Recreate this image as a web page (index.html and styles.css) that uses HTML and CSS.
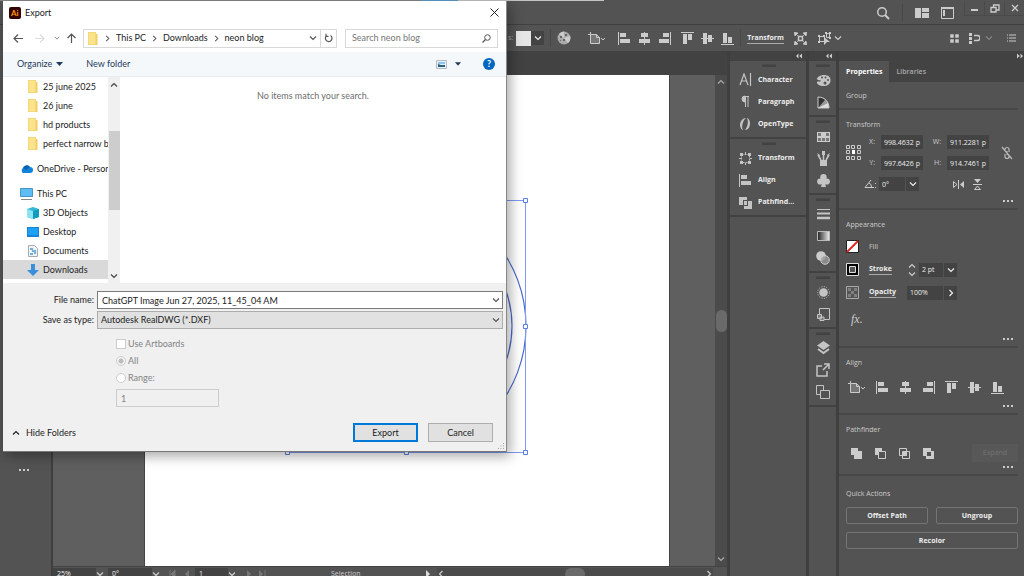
FILE: index.html
```html
<!DOCTYPE html>
<html lang="en">
<head>
    <meta charset="UTF-8">
    <meta name="viewport" content="width=device-width, initial-scale=1.0">
    <title>Export</title>
    <link rel="stylesheet" href="styles.css">
</head>
<body>
    <!-- Shared icons -->
    <svg class="sprite" aria-hidden="true">
        <symbol id="al-left" viewBox="0 0 13 13"><path d="M.5 0v13" stroke="currentColor"/><path d="M2 1h6v4H2zM2 7h10v4H2z" fill="currentColor"/></symbol>
        <symbol id="al-center" viewBox="0 0 13 13"><path d="M6.500 0v13" stroke="currentColor"/><path d="M3 1h7v4H3zM1 7h11v4H1z" fill="currentColor"/></symbol>
        <symbol id="al-right" viewBox="0 0 13 13"><path d="M12.500 0v13" stroke="currentColor"/><path d="M5 1h6v4H5zM1 7h10v4H1z" fill="currentColor"/></symbol>
        <symbol id="al-top" viewBox="0 0 13 13"><path d="M0 .5h13" stroke="currentColor"/><path d="M2 2h4v10H2zM7 2h4v6H7z" fill="currentColor"/></symbol>
        <symbol id="al-middle" viewBox="0 0 13 13"><path d="M0 6.500h13" stroke="currentColor"/><path d="M2 1h4v11H2zM7 3h4v7H7z" fill="currentColor"/></symbol>
        <symbol id="al-bottom" viewBox="0 0 13 13"><path d="M0 12.500h13" stroke="currentColor"/><path d="M2 1h4v10H2zM7 5h4v6H7z" fill="currentColor"/></symbol>
        <symbol id="artboard" viewBox="0 0 18 13"><path d="M2.500 0v2M0 2.500h2" stroke="currentColor"/><path d="M2.500 2.500h6l3 3v6h-9z" fill="#777" stroke="currentColor"/><path d="M8.500 2.500v3h3" fill="none" stroke="currentColor"/><path d="M13 6l2 2 2-2" fill="none" stroke="currentColor"/></symbol>
        <symbol id="down" viewBox="0 0 8 8"><path d="M1 2.500l3 3 3-3" fill="none" stroke="currentColor" stroke-width="1.200"/></symbol>
        <symbol id="up" viewBox="0 0 8 8"><path d="M1 5.500l3-3 3 3" fill="none" stroke="currentColor" stroke-width="1.200"/></symbol>
        <symbol id="right" viewBox="0 0 8 8"><path d="M2.500 1l3 3-3 3" fill="none" stroke="currentColor" stroke-width="1.200"/></symbol>
        <symbol id="left" viewBox="0 0 8 8"><path d="M5.500 1l-3 3 3 3" fill="none" stroke="currentColor" stroke-width="1.200"/></symbol>
        <symbol id="collapse" viewBox="0 0 6 6"><path d="M2.500 .5v5L0 3zM6 .5v5L3.300 3z" fill="currentColor"/></symbol>
        <symbol id="folder" viewBox="0 0 12 13"><path d="M1 0h8v2h1.500v11H1z" fill="#f0ce62"/><path d="M1.500 .5h7v12h-7z" fill="#fbe28c"/></symbol>
        <symbol id="xform" viewBox="0 0 13 13"><path d="M2.500 2.500h8v8h-8z" fill="none" stroke="currentColor" stroke-dasharray="2 1"/><path d="M1 1h3v3H1zM9 1h3v3H9zM1 9h3v3H1zM9 9h3v3H9zM6 0h1v2H6zM6 11h1v2H6zM0 6h2v1H0zM11 6h2v1h-2z" fill="currentColor"/></symbol>
        <symbol id="dots" viewBox="0 0 12 4"><path d="M1 1h2v2H1zM5 1h2v2H5zM9 1h2v2H9z" fill="currentColor"/></symbol>
    </svg>

    <div class="behind"><span class="behind-blue"></span><span class="behind-light"></span></div>

    <!-- Application bars -->
    <header class="titlebar">
        <button class="ib" aria-label="Search"><svg width="14" height="14" viewBox="0 0 14 14"><circle cx="6" cy="6" r="4.300" fill="none" stroke="currentColor" stroke-width="1.500"/><path d="M9 9l4 4" stroke="currentColor" stroke-width="2"/></svg></button>
        <span class="sep"></span>
        <button class="ib" aria-label="Arrange"><svg width="14" height="10" viewBox="0 0 14 10"><path d="M0 0h6v10H0zM7 0h7v4H7zM7 5h7v5H7z" fill="currentColor"/></svg></button>
        <button class="ib" aria-label="Workspace"><svg width="13" height="12" viewBox="0 0 13 12"><path d="M.5 .5h12v11H.5z" fill="none" stroke="currentColor"/><path d="M0 0h13v2H0zM2 3h2v6H2z" fill="currentColor"/></svg></button>
        <div class="wincontrols">
            <button class="ib" aria-label="Minimize"><svg width="9" height="9" viewBox="0 0 9 9"><path d="M1 6h7" stroke="currentColor" stroke-width="2"/></svg></button>
            <button class="ib" aria-label="Restore"><svg width="10" height="9" viewBox="0 0 10 9"><path d="M1 3.500h5V8H1zM3.500 3V1H9v5H6" fill="none" stroke="currentColor" stroke-width="1.300"/></svg></button>
            <button class="ib" aria-label="Close application"><svg width="8" height="8" viewBox="0 0 8 8"><path d="M1 1l6 6M7 1L1 7" stroke="currentColor" stroke-width="1.300"/></svg></button>
        </div>
    </header>

    <div class="controlbar">
        <span class="muted">s:</span>
        <span class="style-swatch"></span>
        <button class="ib field-dark" aria-label="Style"><svg width="8" height="8"><use href="#down"/></svg></button>
        <span class="sep"></span>
        <button class="ib globe" aria-label="Recolor artwork"><svg width="14" height="14" viewBox="0 0 14 14"><circle cx="7" cy="7" r="6.500" fill="#aaa"/><path d="M7 7L2 3A6.500 6.500 0 0 1 7 .5zM7 7l6-2a6.500 6.500 0 0 1-2 7z" fill="#ccc"/><path d="M3 5h2v2H3zM6 8h2v2H6zM3 9h1v1H3zM8 3h2v2H8z" fill="#666"/></svg></button>
        <button class="ib" aria-label="Align to"><svg width="18" height="13"><use href="#artboard"/></svg></button>
        <div class="aligns">
            <button class="ib" aria-label="Align left"><svg width="13" height="13"><use href="#al-left"/></svg></button>
            <button class="ib" aria-label="Align center"><svg width="13" height="13"><use href="#al-center"/></svg></button>
            <button class="ib" aria-label="Align right"><svg width="13" height="13"><use href="#al-right"/></svg></button>
            <button class="ib" aria-label="Align top"><svg width="13" height="13"><use href="#al-top"/></svg></button>
            <button class="ib" aria-label="Align middle"><svg width="13" height="13"><use href="#al-middle"/></svg></button>
            <button class="ib" aria-label="Align bottom"><svg width="13" height="13"><use href="#al-bottom"/></svg></button>
        </div>
        <span class="sep"></span>
        <a class="opt-link" href="#">Transform</a>
        <button class="ib isolate" aria-label="Isolate"><svg width="13" height="13" viewBox="0 0 13 13"><path d="M4.500 4.500h4v4h-4z" fill="none" stroke="currentColor" stroke-width="1.500"/><path d="M0 0l4 1-3 3zM13 0l-4 1 3 3zM0 13l4-1-3-3zM13 13l-4-1 3-3zM1 1l3 3M12 1L9 4M1 12l3-3M12 12L9 9" fill="currentColor" stroke="currentColor" stroke-width=".7"/></svg></button>
        <button class="ib" aria-label="Select similar"><svg width="14" height="13" viewBox="0 0 14 13"><path d="M1.500 4.500h5v5h-5zM8.500 1.500h3v4h-3z" fill="none" stroke="currentColor"/><path d="M0 3h2v2H0zM5 3h2v2H5zM0 9h2v2H0zM7 0h2v2H7zM11 0h2v2h-2zM11 5h2v2h-2zM6 5l6 5H9l-3 3z" fill="currentColor"/></svg></button>
        <button class="ib similar-more" aria-label="More"><svg width="8" height="8"><use href="#down"/></svg></button>
        <div class="controlbar-end">
            <button class="ib" aria-label="Grid"><svg width="9" height="9" viewBox="0 0 9 9"><path d="M0 0h4v4H0zM5 0h4v4H5zM0 5h4v4H0zM5 5h4v4H5z" fill="currentColor" stroke="#535353" stroke-width=".5"/></svg></button>
            <button class="ib" aria-label="Snap"><svg width="11" height="11" viewBox="0 0 11 11"><path d="M0 0h3v3H0zM0 4h3v3H0zM0 8h3v3H0z" fill="currentColor"/><path d="M5 2.500h3.500a2 2 0 0 1 0 5H5" fill="none" stroke="currentColor" stroke-width="1.500"/></svg></button>
            <svg class="faded" width="8" height="8"><use href="#down"/></svg>
            <button class="ib list" aria-label="Menu"><svg width="9" height="8" viewBox="0 0 9 8"><path d="M0 1h1M2 1h7M0 4h1M2 4h7M0 7h1M2 7h7" stroke="currentColor" stroke-width="1.200"/></svg></button>
        </div>
    </div>

    <main class="workspace">
        <aside class="tools"><button class="ib" aria-label="Edit toolbar"><svg width="12" height="4"><use href="#dots"/></svg></button></aside>

        <div class="document">
            <div class="tabstrip"></div>
            <div class="view">
                <div class="pasteboard">
                    <div class="artboard">
                        <svg class="selection" width="246" height="260" viewBox="0 0 246 260" fill="none">
                            <g stroke="#4a69cc" stroke-width="1.200"><ellipse cx="121" cy="129" rx="120" ry="126"/><ellipse cx="121" cy="129" rx="106" ry="106"/></g>
                            <path d="M2.500 3.500h238v252H2.500z" stroke="#7d9bee"/>
                            <g fill="#fff" stroke="#5a7fe8"><path d="M238.500 1.500h4v4h-4zM238.500 127.500h4v4h-4zM238.500 253.500h4v4h-4zM119.500 253.500h4v4h-4zM.5 253.500h4v4h-4z"/></g>
                        </svg>
                    </div>
                </div>
                <div class="vscroll"><svg width="8" height="8"><use href="#up"/></svg><span class="vthumb"></span><svg width="8" height="8"><use href="#down"/></svg></div>
            </div>
            <footer class="statusbar">
                <div class="status-in">
                    <span class="st-field zoom">25%</span><svg class="st-arrow" width="8" height="8"><use href="#down"/></svg>
                    <span class="st-field rot">0°</span><svg class="st-arrow" width="8" height="8"><use href="#down"/></svg>
                    <svg class="st-nav faded" width="22" height="8" viewBox="0 0 22 8"><path d="M1 0v8M6 0v8L2 4z" fill="#aaa" stroke="#aaa"/><path d="M20 0v8l-4-4z" fill="#aaa"/></svg>
                    <span class="st-field page">1</span><svg class="st-arrow" width="8" height="8"><use href="#down"/></svg>
                    <svg class="st-nav faded" width="22" height="8" viewBox="0 0 22 8"><path d="M2 0v8l4-4zM14 0v8l4-4z" fill="#aaa"/><path d="M20 0v8" stroke="#aaa"/></svg>
                    <span class="st-mode">Selection</span>
                    <svg width="6" height="8" viewBox="0 0 6 8"><path d="M1 0v8l4-4z" fill="#ddd"/></svg>
                    <div class="hscroll"><svg width="8" height="8"><use href="#left"/></svg><span class="hthumb"></span><svg width="8" height="8"><use href="#right"/></svg></div>
                </div>
            </footer>
        </div>

        <nav class="dock">
            <div class="dock-head"><svg width="6" height="6"><use href="#collapse"/></svg></div>
            <div class="dock-group">
                <button class="dock-item"><svg width="13" height="14" viewBox="0 0 13 14"><path d="M1 12L5 1l4 11M2.500 8h5M11.500 0v13" fill="none" stroke="currentColor" stroke-width="1.200"/></svg>Character</button>
                <button class="dock-item"><svg width="13" height="14" viewBox="0 0 13 14"><path d="M6 1v6a3 3 0 0 1 0-6z" fill="currentColor" stroke="currentColor"/><path d="M6.500 1v11M9 1v11M6 1.500h4" stroke="currentColor"/></svg>Paragraph</button>
                <button class="dock-item"><svg width="13" height="14" viewBox="0 0 13 14"><path d="M7 1C3 1 1 5 1 8s2 5 3 5c-2-3 0-10 3-12zM6 13c4 0 5-4 5-7S9 1 8 1c2 4 0 10-2 12z" fill="currentColor"/></svg>OpenType</button>
            </div>
            <div class="dock-group">
                <button class="dock-item"><svg width="13" height="13"><use href="#xform"/></svg>Transform</button>
                <button class="dock-item"><svg width="13" height="13"><use href="#al-left"/></svg>Align</button>
                <button class="dock-item"><svg width="13" height="13" viewBox="0 0 13 13"><path d="M0 1h8v3H4v5H0zM5 5h3v4H5zM9 5h4v8H5v-3h4z" fill="currentColor"/></svg>Pathfind...</button>
            </div>
        </nav>

        <nav class="dock icons">
            <div class="dock-head"><svg width="6" height="6"><use href="#collapse"/></svg></div>
            <div class="dock-group">
                <button class="dock-item" aria-label="Color"><svg width="15" height="13" viewBox="0 0 15 13"><path d="M8 1c4 0 7 2 6.500 6S10 12.500 6 12 .5 9 1 8s4 0 4-1-4-.5-4-2 3-4 7-4z" fill="currentColor"/><g fill="#535353"><circle cx="6" cy="3.500" r="1"/><circle cx="9.500" cy="3.500" r="1"/><circle cx="12" cy="6" r="1"/><circle cx="9" cy="9" r="1.500"/></g></svg></button>
                <button class="dock-item" aria-label="Color guide"><svg width="13" height="13" viewBox="0 0 13 13"><path d="M1 1c7 0 11 5 11 11H1z" fill="#999"/><path d="M1 1c3 0 5 1 7 3l-7 8z" fill="#333"/><path d="M1 12L11 7l1 5z" fill="#ddd"/><path d="M1 1c7 0 11 5 11 11H1z" fill="none" stroke="#ccc"/></svg></button>
            </div>
            <div class="dock-group">
                <button class="dock-item" aria-label="Swatches"><svg width="13" height="11" viewBox="0 0 13 11"><path d="M0 1h13v10H0z" fill="#ccc"/><path d="M1 2h3v3H1zM9 2h3v3H9zM1 7h3v3H1zM5 7h3v3H5zM9 7h3v3H9z" fill="#777"/></svg></button>
                <button class="dock-item" aria-label="Brushes"><svg width="13" height="15" viewBox="0 0 13 15"><path d="M3 9h7v6H3z" fill="currentColor"/><path d="M4 9L1 4M6.500 9V2M9 9l3-5" stroke="currentColor" stroke-width="1.500"/><path d="M0 2l3 2-1 2zM5 0h3v4H5zM13 2l-3 2 1 2z" fill="currentColor"/></svg></button>
                <button class="dock-item" aria-label="Symbols"><svg width="13" height="13" viewBox="0 0 13 13"><g fill="currentColor"><circle cx="6.500" cy="3.200" r="3.200"/><circle cx="3.200" cy="7.500" r="3.100"/><circle cx="9.800" cy="7.500" r="3.100"/><path d="M6 6h1l2 7H4z"/></g></svg></button>
            </div>
            <div class="dock-group">
                <button class="dock-item" aria-label="Stroke"><svg width="13" height="12" viewBox="0 0 13 12"><path d="M0 1.500h13" stroke="currentColor"/><path d="M0 5.500h13" stroke="currentColor" stroke-width="2"/><path d="M0 10h13" stroke="currentColor" stroke-width="2.500"/></svg></button>
                <button class="dock-item" aria-label="Gradient"><svg width="13" height="11" viewBox="0 0 13 11"><defs><linearGradient id="gr"><stop stop-color="#222"/><stop offset="1" stop-color="#eee"/></linearGradient></defs><path d="M.5 .5h12v9H.5z" fill="url(#gr)" stroke="#bbb"/></svg></button>
                <button class="dock-item" aria-label="Transparency"><svg width="14" height="14" viewBox="0 0 14 14"><circle cx="5" cy="5" r="4.800" fill="#ccc"/><circle cx="9" cy="9" r="4.300" fill="#999" fill-opacity=".8" stroke="#ccc"/></svg></button>
            </div>
            <div class="dock-group">
                <button class="dock-item" aria-label="Appearance"><svg width="13" height="13" viewBox="0 0 13 13"><circle cx="6.500" cy="6.500" r="4.300" fill="currentColor"/><circle cx="6.500" cy="6.500" r="5.900" fill="none" stroke="currentColor" stroke-dasharray="1 1.500"/></svg></button>
                <button class="dock-item" aria-label="Graphic styles"><svg width="13" height="13" viewBox="0 0 13 13"><path d="M2.500 6V.5h10v11H7" fill="none" stroke="currentColor"/><path d="M.5 6.500h4v4h-4zM3 9h4v3.500H3z" fill="#777" stroke="currentColor"/></svg></button>
            </div>
            <div class="dock-group">
                <button class="dock-item" aria-label="Layers"><svg width="13" height="14" viewBox="0 0 13 14"><path d="M6.500 0L13 4.500 6.500 9 0 4.500z" fill="currentColor"/><path d="M1 8l5.500 4L12 8" fill="none" stroke="currentColor" stroke-width="2"/></svg></button>
                <button class="dock-item" aria-label="Asset export"><svg width="14" height="14" viewBox="0 0 14 14"><path d="M6 3H1v10h10V8" fill="none" stroke="currentColor" stroke-width="1.500"/><path d="M8 1h5v5M13 1L7 7" fill="none" stroke="currentColor" stroke-width="1.500"/></svg></button>
                <button class="dock-item" aria-label="Artboards"><svg width="14" height="14" viewBox="0 0 14 14"><path d="M4 9.500H.5v-9h7V5M4.500 5.500h9v8h-9z" fill="none" stroke="currentColor"/></svg></button>
            </div>
        </nav>

        <section class="props">
            <div class="dock-head"><svg class="flip" width="6" height="6"><use href="#collapse"/></svg></div>
            <div class="tabs"><button class="tab active">Properties</button><button class="tab">Libraries</button></div>
            <div class="group kind">Group</div>
            <div class="group">
                <h2>Transform</h2>
                <div class="xform">
                    <svg class="refpoint" width="15" height="17" viewBox="0 0 15 17"><g fill="none" stroke="#ccc"><path d="M.5 1.500h3v3h-3zM5.500 1.500h3v3h-3zM11.500 1.500h3v3h-3zM.5 6.500h3v3h-3zM11.500 6.500h3v3h-3zM.5 12.500h3v3h-3zM5.500 12.500h3v3h-3zM11.500 12.500h3v3h-3z"/></g><path d="M6 6h3v4H6z" fill="#fff"/></svg>
                    <label for="x">X:</label><input id="x" value="998.4632 p">
                    <label for="w">W:</label><input id="w" value="911.2281 p">
                    <label for="y">Y:</label><input id="y" value="997.6426 p">
                    <label for="h">H:</label><input id="h" value="914.7461 p">
                    <svg class="unlink" width="12" height="14" viewBox="0 0 12 14"><path d="M1 1l10 12M4 5V3.500a2 2 0 0 1 4 0V6M4 8v2.500a2 2 0 0 0 4 0V9M6 5v4" fill="none" stroke="#bbb" stroke-width="1.200"/></svg>
                </div>
                <div class="angle">
                    <label for="angle"><svg width="13" height="9" viewBox="0 0 13 9"><path d="M7 0L1 7.500h9M5 3q2.500 1 2.500 4" fill="none" stroke="currentColor"/><path d="M11 3h1v1h-1zM11 7h1v1h-1z" fill="currentColor"/></svg></label>
                    <input id="angle" value="0°"><button class="ib field-dark" aria-label="Angle list"><svg width="8" height="8"><use href="#down"/></svg></button>
                    <button class="ib flip-h" aria-label="Flip horizontal"><svg width="11" height="9" viewBox="0 0 11 9"><path d="M.5 1.500l3.500 3-3.500 3z" fill="none" stroke="currentColor"/><path d="M5.500 0v9" stroke="currentColor"/><path d="M11 1v7L7 4.500z" fill="currentColor"/></svg></button>
                    <button class="ib" aria-label="Flip vertical"><svg width="9" height="11" viewBox="0 0 9 11"><path d="M1 0h7L4.500 4z" fill="currentColor"/><path d="M0 5.500h9M1.500 10.500l3-3.500 3 3.500z" fill="none" stroke="currentColor"/></svg></button>
                </div>
                <button class="more" aria-label="More options"><svg width="12" height="4"><use href="#dots"/></svg></button>
            </div>
            <div class="group">
                <h2>Appearance</h2>
                <div class="look"><svg width="13" height="13" viewBox="0 0 13 13"><path d="M.5 .5h12v12H.5z" fill="#fff" stroke="#222"/><path d="M1 12L12 1" stroke="#e02020" stroke-width="1.800"/></svg><span>Fill</span></div>
                <div class="look"><svg width="13" height="13" viewBox="0 0 13 13"><path d="M.5 .5h12v12H.5z" stroke="#ddd"/><path d="M3.500 3.500h6v6h-6z" fill="#555" stroke="#ddd"/></svg><a class="opt-link" href="#">Stroke</a>
                    <span class="stepper"><svg width="8" height="8"><use href="#up"/></svg><svg width="8" height="8"><use href="#down"/></svg></span>
                    <input class="weight" aria-label="Stroke weight" value="2 pt"><button class="ib field-dark" aria-label="Weight list"><svg width="8" height="8"><use href="#down"/></svg></button></div>
                <div class="look"><svg width="13" height="13" viewBox="0 0 13 13"><path d="M.5 .5h12v12H.5z" fill="#555" stroke="#aaa"/><path d="M2 2h3v3H2zM8 2h3v3H8zM5 5h3v3H5zM2 8h3v3H2zM8 8h3v3H8z" fill="#808080"/></svg><a class="opt-link" href="#">Opacity</a>
                    <input class="opacity" aria-label="Opacity" value="100%"><button class="ib field-dark" aria-label="Opacity slider"><svg width="8" height="8"><use href="#right"/></svg></button></div>
                <button class="fx">fx.</button>
                <button class="more" aria-label="More options"><svg width="12" height="4"><use href="#dots"/></svg></button>
            </div>
            <div class="group">
                <h2>Align</h2>
                <div class="panel-aligns">
                    <button class="ib" aria-label="Align to"><svg width="18" height="13"><use href="#artboard"/></svg></button>
                    <button class="ib" aria-label="Left"><svg width="13" height="13"><use href="#al-left"/></svg></button>
                    <button class="ib" aria-label="Center"><svg width="13" height="13"><use href="#al-center"/></svg></button>
                    <button class="ib" aria-label="Right"><svg width="13" height="13"><use href="#al-right"/></svg></button>
                    <button class="ib" aria-label="Top"><svg width="13" height="13"><use href="#al-top"/></svg></button>
                    <button class="ib" aria-label="Middle"><svg width="13" height="13"><use href="#al-middle"/></svg></button>
                    <button class="ib" aria-label="Bottom"><svg width="13" height="13"><use href="#al-bottom"/></svg></button>
                </div>
                <button class="more" aria-label="More options"><svg width="12" height="4"><use href="#dots"/></svg></button>
            </div>
            <div class="group">
                <h2>Pathfinder</h2>
                <div class="paths">
                    <button class="ib" aria-label="Unite"><svg width="12" height="12" viewBox="0 0 12 12"><path d="M1 1h7v3h4v8H4V8H1z" fill="currentColor"/></svg></button>
                    <button class="ib" aria-label="Minus front"><svg width="12" height="12" viewBox="0 0 12 12"><path d="M1 1h7v3H4v4H1z" fill="currentColor"/><path d="M4.500 4.500h7v7h-7z" fill="none" stroke="currentColor"/></svg></button>
                    <button class="ib" aria-label="Intersect"><svg width="12" height="12" viewBox="0 0 12 12"><path d="M1.500 1.500h7v7h-7zM4.500 4.500h7v7h-7z" fill="none" stroke="currentColor"/><path d="M5 5h4v4H5z" fill="currentColor"/></svg></button>
                    <button class="ib" aria-label="Exclude"><svg width="12" height="12" viewBox="0 0 12 12"><path d="M1 1h8v3h3v8H4V9H1zM5 5v4h4V5z" fill="currentColor" fill-rule="evenodd"/></svg></button>
                    <button class="expand" disabled>Expand</button>
                </div>
                <button class="more" aria-label="More options"><svg width="12" height="4"><use href="#dots"/></svg></button>
            </div>
            <div class="group">
                <h2>Quick Actions</h2>
                <div class="quick"><button>Offset Path</button><button>Ungroup</button><button class="wide">Recolor</button></div>
            </div>
        </section>
    </main>

    <!-- Export dialog -->
    <form class="dialog">
        <div class="dlg-title">
            <svg width="12" height="12" viewBox="0 0 12 12"><rect width="12" height="12" rx="2" fill="#330000"/><text class="ai" x="2" y="9">Ai</text></svg>
            <span>Export</span>
            <button type="button" class="dlg-close" aria-label="Close"><svg width="9" height="9" viewBox="0 0 9 9"><path d="M.5 .5l8 8M8.500 .5l-8 8" stroke="#222"/></svg></button>
        </div>
        <div class="dlg-nav">
            <button type="button" aria-label="Back"><svg width="10" height="9" viewBox="0 0 10 9"><path d="M10 4.500H1M5 .5l-4 4 4 4" fill="none" stroke="#555" stroke-width="1.200"/></svg></button>
            <button type="button" aria-label="Forward"><svg width="10" height="9" viewBox="0 0 10 9"><path d="M0 4.500h9M5 .5l4 4-4 4" fill="none" stroke="#ddd" stroke-width="1.200"/></svg></button>
            <button type="button" class="recent" aria-label="Recent"><svg width="6" height="6" viewBox="0 0 8 8"><use href="#down"/></svg></button>
            <button type="button" aria-label="Up"><svg width="9" height="10" viewBox="0 0 9 10"><path d="M4.500 10V1M.5 5l4-4 4 4" fill="none" stroke="#555" stroke-width="1.200"/></svg></button>
            <div class="address">
                <svg width="12" height="13"><use href="#folder"/></svg>
                <svg class="crumb-sep" width="7" height="7" viewBox="0 0 8 8"><use href="#right"/></svg><span class="crumb">This PC</span>
                <svg class="crumb-sep" width="7" height="7" viewBox="0 0 8 8"><use href="#right"/></svg><span class="crumb">Downloads</span>
                <svg class="crumb-sep" width="7" height="7" viewBox="0 0 8 8"><use href="#right"/></svg><span class="crumb">neon blog</span>
                <button type="button" class="history" aria-label="History"><svg width="8" height="8"><use href="#down"/></svg></button>
                <button type="button" class="refresh" aria-label="Refresh"><svg width="9" height="10" viewBox="0 0 9 10"><path d="M6.500 2.500A3.300 3.300 0 1 1 2.500 2.800M2 .8v2.500h2.500" fill="none" stroke="#555" stroke-width="1.200"/></svg></button>
            </div>
            <div class="search"><input type="text" aria-label="Search" placeholder="Search neon blog"><svg width="9" height="9" viewBox="0 0 9 9"><circle cx="5.500" cy="3.500" r="2.800" fill="none" stroke="#555"/><path d="M3.500 5.500L.5 8.500" stroke="#555" stroke-width="1.300"/></svg></div>
        </div>
        <div class="dlg-cmd">
            <button type="button">Organize <svg width="7" height="4" viewBox="0 0 7 4"><path d="M0 0h7L3.500 4z" fill="#1e3a5f"/></svg></button>
            <button type="button" class="newfolder">New folder</button>
            <button type="button" class="viewmode" aria-label="View"><svg width="11" height="9" viewBox="0 0 11 9"><path d="M.5 .5h10v8H.5z" fill="#e8f1f8" stroke="#b4bcc2"/><path d="M2 2h7v2H2z" fill="#8ec4ee"/><path d="M2 4l3 1h4v2H2z" fill="#2b5f80"/></svg><svg width="6" height="4" viewBox="0 0 7 4"><path d="M0 0h7L3.500 4z" fill="#1e3a5f"/></svg></button>
            <button type="button" class="help" aria-label="Help">?</button>
        </div>
        <div class="dlg-body">
            <ul class="tree">
                <li><svg width="12" height="13"><use href="#folder"/></svg>25 june 2025</li>
                <li><svg width="12" height="13"><use href="#folder"/></svg>26 june</li>
                <li><svg width="12" height="13"><use href="#folder"/></svg>hd products</li>
                <li><svg width="12" height="13"><use href="#folder"/></svg>perfect narrow b</li>
                <li class="root"><svg width="13" height="9" viewBox="0 0 13 9"><path d="M3 9a3 3 0 0 1 0-5 4 4 0 0 1 7-1 3 3 0 0 1 0 6z" fill="#1283da"/><path d="M3 4a4 4 0 0 1 7-1L6 6z" fill="#0b62b5"/></svg>OneDrive - Personal</li>
                <li class="root"><svg width="13" height="12" viewBox="0 0 13 12"><path d="M.5 .5h12v8H.5z" fill="#5dbdf5" stroke="#4a94c4"/><path d="M1 11.500h11" stroke="#888"/></svg>This PC</li>
                <li><svg width="12" height="12" viewBox="0 0 12 12"><path d="M0 2l6-2 6 2v8l-6 2-6-2z" fill="#35b8d8"/><path d="M0 2l6 2v8l-6-2z" fill="#8be4f2"/><path d="M6 4l6-2v8l-6 2z" fill="#129bbd"/></svg>3D Objects</li>
                <li><svg width="12" height="12" viewBox="0 0 12 12"><path d="M0 1h12v10H0z" fill="#1883d7"/><path d="M1 2h10v7H1z" fill="#1ea0f5"/></svg>Desktop</li>
                <li><svg width="12" height="12" viewBox="0 0 12 12"><path d="M1.500 .5h6l3 3v8h-9z" fill="#eef3f6" stroke="#a5acb0"/><path d="M3 4h3M5 6h4M3 9h3M7 8h2" stroke="#4a9ad0" stroke-width="1.500"/></svg>Documents</li>
                <li class="current"><svg width="12" height="12" viewBox="0 0 12 12"><path d="M4 0h4v6h4l-6 6-6-6h4z" fill="#3a8fdc"/></svg>Downloads</li>
            </ul>
            <div class="tree-scroll"><svg width="8" height="8"><use href="#up"/></svg><span></span><svg width="8" height="8"><use href="#down"/></svg></div>
            <div class="files">No items match your search.</div>
        </div>
        <div class="dlg-foot">
            <div class="row">
                <label for="fname">File name:</label>
                <div class="combo white"><input type="text" id="fname" value="ChatGPT Image Jun 27, 2025, 11_45_04 AM"><svg width="8" height="8"><use href="#down"/></svg></div>
            </div>
            <div class="row">
                <label for="ftype">Save as type:</label>
                <div class="combo"><select id="ftype"><option>Autodesk RealDWG (*.DXF)</option></select><svg width="8" height="8"><use href="#down"/></svg></div>
            </div>
            <div class="opts">
                <label><input type="checkbox" disabled>Use Artboards</label>
                <label><input type="radio" name="boards" checked disabled>All</label>
                <label><input type="radio" name="boards" disabled>Range:</label>
                <input type="text" class="range" aria-label="Range" value="1" disabled>
            </div>
            <div class="actions">
                <button type="button" class="hide"><svg width="8" height="8"><use href="#up"/></svg>Hide Folders</button>
                <button type="submit" class="btn primary">Export</button>
                <button type="button" class="btn">Cancel</button>
            </div>
            <svg class="grip" width="7" height="7" viewBox="0 0 7 7"><path d="M5 0h1v1H5zM5 2.500h1v1H5zM5 5h1v1H5zM2.500 2.500h1v1h-1zM2.500 5h1v1h-1zM0 5h1v1H0z" fill="#aaa"/></svg>
        </div>
    </form>
</body>
</html>
```
FILE: styles.css
```css
* {
    margin: 0;
    padding: 0;
    box-sizing: border-box;
}

body {
    font-family: "Open Sans", "Noto Sans", sans-serif;
    font-size: 7px;
    line-height: 12px;
    height: 100vh;
    display: flex;
    flex-direction: column;
    overflow: hidden;
    background-color: #535353;
    color: #ccc;
}

button, input, select {
    font: inherit;
    color: inherit;
    background: none;
    border: none;
    border-radius: 0;
    outline: none;
}

svg {
    display: block;
    flex: none;
}

a {
    color: inherit;
}

.sprite {
    position: absolute;
    width: 0;
    height: 0;
}

.ib {
    display: flex;
    align-items: center;
    justify-content: center;
    flex: none;
}

.sep {
    width: 1px;
    height: 18px;
    background-color: #484848;
}

.faded {
    opacity: 0.4;
}

.muted {
    color: #aaa;
}

/* Top bars */
.behind {
    display: flex;
    flex: none;
    height: 1px;
    background-color: #858585;
    padding-left: 421px;
    width: 604px;
}

.behind-blue {
    width: 37px;
    background-color: #5b9bd0;
}

.behind-light {
    flex: 1;
    background-color: #c4c4c4;
}

.titlebar {
    display: flex;
    flex: none;
    height: 23px;
    align-items: center;
    justify-content: flex-end;
    gap: 12px;
}

.wincontrols {
    display: flex;
    align-self: flex-start;
    height: 15px;
    margin-left: -2px;
}

.wincontrols .ib {
    width: 20px;
    border-left: 1px solid #4a4a4a;
    border-bottom: 1px solid #4a4a4a;
}

.controlbar {
    display: flex;
    flex: none;
    align-items: center;
    height: 27px;
    padding-left: 508px;
    border-top: 1px solid #404040;
}

.style-swatch {
    width: 15px;
    height: 15px;
    margin-left: 3px;
    background-color: #e6e6e6;
}

.field-dark {
    width: 13px;
    height: 14px;
    background-color: #434343;
    color: #eee;
}

.controlbar .sep {
    margin-left: 6px;
}

.globe {
    margin: 0 17px 0 6px;
}

.aligns {
    display: flex;
    gap: 7px;
    margin-left: 12px;
}

.aligns .ib:nth-child(4) {
    margin-left: 3px;
}

.opt-link {
    font-weight: 700;
    line-height: 10px;
    color: #eee;
    text-decoration: none;
    border-bottom: 1px solid #aaa;
}

.controlbar .opt-link {
    margin-left: 6px;
}

.isolate {
    margin: 0 11px 0 10px;
}

.similar-more {
    margin-left: 2px;
}

.controlbar-end {
    display: flex;
    align-items: center;
    margin-left: auto;
    padding-right: 8px;
    gap: 10px;
}

.controlbar-end .faded {
    margin-left: -5px;
}

.list {
    margin-left: 4px;
}

/* Work area */
.workspace {
    display: flex;
    flex: 1;
    min-height: 0;
    background-color: #3f3f3f;
    gap: 3px;
}

.tools {
    flex: none;
    width: 51px;
    background-color: #535353;
    padding: 417px 0 0 18px;
}

.document {
    flex: 1;
    min-width: 0;
    display: flex;
    flex-direction: column;
    margin-left: -1px;
}

.tabstrip {
    flex: none;
    height: 24px;
    background-color: #424242;
}

.view {
    flex: 1;
    display: flex;
    min-height: 0;
}

.pasteboard {
    flex: 1;
    padding: 0 46px 0 92px;
    background-color: #5f5f5f;
}

.artboard {
    position: relative;
    height: 100%;
    background-color: #fff;
    box-shadow: 0 0 0 1px #444;
}

.selection {
    position: absolute;
    left: 140px;
    top: 122px;
}

.vscroll {
    flex: none;
    width: 12px;
    background-color: #4b4b4b;
    display: flex;
    flex-direction: column;
    align-items: center;
    justify-content: space-between;
    padding: 3px 0;
    color: #aaa;
}

.vthumb {
    width: 11px;
    height: 22px;
    border-radius: 6px;
    background-color: #6a6a6a;
}

.statusbar {
    flex: none;
    height: 10px;
    overflow: hidden;
    background-color: #535353;
    border-top: 1px solid #444;
}

.status-in {
    display: flex;
    align-items: center;
    height: 14px;
}

.st-field {
    background-color: #434343;
    color: #eee;
    padding-left: 4px;
}

.zoom {
    width: 43px;
}

.rot {
    width: 44px;
    margin-left: 4px;
}

.page {
    width: 33px;
}

.st-nav {
    margin: 0 4px 0 9px;
}

.st-mode {
    margin-left: 60px;
    width: 94px;
}

.hscroll {
    flex: 1;
    display: flex;
    justify-content: space-between;
    align-items: center;
    margin: 0 14px 0 6px;
    background-color: #4b4b4b;
}

.hthumb {
    width: 20px;
    height: 12px;
    border-radius: 6px;
    background-color: #6a6a6a;
}

/* Docks */
.dock {
    flex: none;
    width: 76px;
    background-color: #535353;
}

.dock-head {
    height: 10px;
    background-color: #424242;
    display: flex;
    justify-content: flex-end;
    align-items: center;
    padding-right: 4px;
}

.flip {
    transform: scaleX(-1);
}

.dock-group {
    padding-bottom: 2px;
    border-bottom: 2px solid #424242;
}

.dock-group::before {
    content: "";
    display: block;
    width: 14px;
    height: 2px;
    margin: 3px auto 2px;
    background-color: #424242;
    border-top: 1px solid #4a4a4a;
}

.dock:not(.icons) .dock-group::before {
    margin-left: 32px;
}

.dock-item {
    display: flex;
    align-items: center;
    gap: 6px;
    width: 100%;
    height: 22px;
    padding-left: 9px;
    font-weight: 700;
    color: #eee;
}

.dock-item svg {
    color: #c4c4c4;
}

.icons {
    width: 27px;
}

.icons .dock-item {
    justify-content: center;
    padding: 0 0 0 1px;
}

/* Properties panel */
.props {
    flex: none;
    width: 185px;
    background-color: #535353;
}

.props .dock-head {
    padding-right: 1px;
}

.tabs {
    display: flex;
    height: 21px;
    background-color: #434343;
}

.tab {
    padding: 0 7px;
    color: #aaa;
    font-weight: 600;
}

.tab.active {
    background-color: #535353;
    color: #fff;
    font-weight: 700;
}

.group {
    margin: 0 6px 0 0;
    padding: 9px 0 3px 7px;
    border-bottom: 2px solid #484848;
}

.group:last-child {
    border: none;
    padding-top: 12px;
}

.kind {
    padding: 8px 7px 6px;
}

.group h2 {
    font-size: 7px;
    font-weight: 400;
    line-height: 12px;
}

.props input {
    height: 14px;
    padding-left: 3px;
    background-color: #434343;
    color: #eee;
}

.xform {
    display: grid;
    grid-template-columns: 17px 18px 42px 24px 42px 1fr;
    row-gap: 7px;
    margin-top: 4px;
    align-items: center;
}

.xform label {
    text-align: right;
    padding-right: 6px;
}

.xform input {
    width: 42px;
    min-width: 0;
}

.xform .refpoint, .xform .unlink {
    grid-row: 1 / 3;
}

.refpoint {
    grid-column: 1;
}

.unlink {
    grid-column: 6;
    margin-left: 12px;
}

.angle {
    display: flex;
    align-items: center;
    gap: 1px;
    margin: 7px 0 6px 18px;
}

.angle input {
    width: 26px;
    margin-left: 1px;
}

.flip-h {
    margin: 0 8px 0 33px;
}

.more {
    display: block;
    margin-left: auto;
    height: 8px;
    padding-right: 4px;
}

.look {
    display: flex;
    align-items: center;
    height: 23px;
}

.look > svg {
    margin-right: 10px;
}

.group h2 + .look {
    margin-top: 4px;
}

.stepper {
    margin-left: auto;
}

.look input {
    margin-right: 1px;
}

.weight {
    width: 24px;
    margin-left: 3px;
}

.opacity {
    width: 36px;
    margin-left: auto;
}

.look .field-dark {
    margin-right: 61px;
}

.fx {
    display: block;
    margin: 9px 0 10px 5px;
    font-family: "Liberation Serif", serif;
    font-style: italic;
    font-size: 12px;
}

.panel-aligns {
    display: flex;
    gap: 10px;
    margin: 12px 0 8px 2px;
}

.paths {
    display: flex;
    align-items: center;
    gap: 12px;
    height: 20px;
    margin: 7px 0 0 4px;
}

.expand {
    width: 46px;
    height: 18px;
    margin-left: auto;
    background-color: #585858;
    color: #747474;
}

.quick {
    display: grid;
    grid-template-columns: 1fr 1fr;
    gap: 8px;
    margin-top: 7px;
}

.quick button {
    height: 17px;
    border: 1px solid #747474;
    border-radius: 2px;
    color: #eee;
    font-weight: 700;
}

.wide {
    grid-column: 1 / 3;
}

/* Export dialog floats above the workspace */
.dialog {
    position: absolute;
    left: 3px;
    top: 1px;
    width: 504px;
    font-family: Lato, "Open Sans", sans-serif;
    font-size: 9px;
    background-color: #fff;
    color: #222;
    border-right: 1px solid #888;
    border-bottom: 1px solid #777;
    box-shadow: 3px 4px 12px rgba(0, 0, 0, 0.35);
}

.dialog button {
    display: flex;
    align-items: center;
}

.dlg-title {
    display: flex;
    align-items: center;
    gap: 4px;
    height: 23px;
    padding: 0 7px 0 6px;
}

.ai {
    font-size: 8px;
    font-weight: 700;
    fill: #ff9a00;
}

.dlg-close {
    margin-left: auto;
}

.dlg-nav {
    display: flex;
    align-items: center;
    gap: 12px;
    height: 28px;
    padding: 0 8px 0 10px;
}

.recent {
    color: #777;
    margin: 0 -5px 0 -3px;
}

.address {
    flex: 1;
    display: flex;
    align-items: center;
    height: 19px;
    margin-left: -5px;
    padding-left: 3px;
    border: 1px solid #d9d9d9;
}

.crumb-sep {
    margin: 0 5px;
    color: #555;
}

.history {
    margin-left: auto;
    padding-right: 3px;
    color: #555;
}

.refresh {
    height: 17px;
    padding: 0 3px;
    border-left: 1px solid #d9d9d9;
}

.search {
    display: flex;
    align-items: center;
    width: 153px;
    height: 19px;
    margin-left: -4px;
    padding: 0 6px;
    border: 1px solid #d9d9d9;
}

.search input {
    flex: 1;
    min-width: 0;
}

.search input::placeholder {
    color: #767676;
}

.dlg-cmd {
    display: flex;
    align-items: center;
    height: 25px;
    padding: 0 11px 0 14px;
    background-color: #f5f8fa;
    border-bottom: 1px solid #e8ecef;
    color: #1e3a5f;
}

.dlg-cmd button {
    gap: 4px;
}

.newfolder {
    margin-left: 23px;
}

.dlg-cmd .viewmode {
    gap: 8px;
    margin-left: auto;
}

.dlg-cmd .help {
    justify-content: center;
    width: 12px;
    height: 12px;
    margin-left: 22px;
    border-radius: 50%;
    background-color: #0067c0;
    color: #fff;
    font-weight: 700;
}

.dlg-body {
    display: flex;
    height: 206px;
}

.tree {
    width: 105px;
    list-style: none;
    overflow: hidden;
    white-space: nowrap;
}

.tree li {
    display: flex;
    align-items: center;
    gap: 4px;
    height: 19px;
    padding-left: 24px;
}

.tree .root {
    margin-top: 6px;
    padding-left: 17px;
}

.tree .current {
    background-color: #d9d9d9;
}

.tree-scroll {
    display: flex;
    flex-direction: column;
    align-items: center;
    width: 12px;
    padding: 4px 0 3px;
    background-color: #f0f0f0;
    color: #444;
}

.tree-scroll span {
    width: 11px;
    height: 79px;
    margin: 42px 0 auto;
    background-color: #cdcdcd;
}

.files {
    flex: 1;
    padding-top: 13px;
    text-align: center;
    color: #6d6d6d;
}

.dlg-foot {
    position: relative;
    padding: 8px 3px 9px 0;
    background-color: #f0f0f0;
}

.row {
    display: flex;
    align-items: center;
    margin-bottom: 2px;
}

.row label {
    width: 91px;
    text-align: right;
    margin-right: 3px;
}

.combo {
    position: relative;
    flex: 1;
    height: 18px;
    border: 1px solid #adadad;
    background-color: #e1e1e1;
}

.combo.white {
    background-color: #fff;
    border-color: #7a7a7a;
}

.combo input, .combo select {
    width: 100%;
    height: 16px;
    padding-left: 4px;
    appearance: none;
}

.combo select {
    padding-left: 3px;
}

.combo svg {
    position: absolute;
    right: 2px;
    top: 4px;
    color: #555;
    pointer-events: none;
}

.opts {
    display: flex;
    flex-direction: column;
    align-items: flex-start;
    gap: 5px;
    margin: 9px 0 0 113px;
    color: #838383;
}

.opts label {
    display: flex;
    align-items: center;
    gap: 2px;
}

.opts input[type="checkbox"], .opts input[type="radio"] {
    appearance: none;
    width: 10px;
    height: 10px;
    border: 1px solid #ccc;
    background-color: #fff;
}

.opts input[type="radio"] {
    border-radius: 50%;
}

.opts input[type="radio"]:checked {
    background: radial-gradient(circle, #bbb 2px, #f6f6f6 3px);
}

.range {
    width: 103px;
    height: 18px;
    padding-left: 4px;
    border: 1px solid #ccc;
}

.actions {
    display: flex;
    align-items: center;
    gap: 10px;
    margin-top: 16px;
    padding: 0 10px 0 9px;
}

.dialog .hide {
    gap: 6px;
    margin-right: auto;
}

.dialog .btn {
    justify-content: center;
    width: 65px;
    height: 19px;
    background-color: #e1e1e1;
    border: 1px solid #adadad;
}

.dialog .primary {
    border: 2px solid #0078d7;
}

.grip {
    position: absolute;
    right: 1px;
    bottom: 1px;
}
```
